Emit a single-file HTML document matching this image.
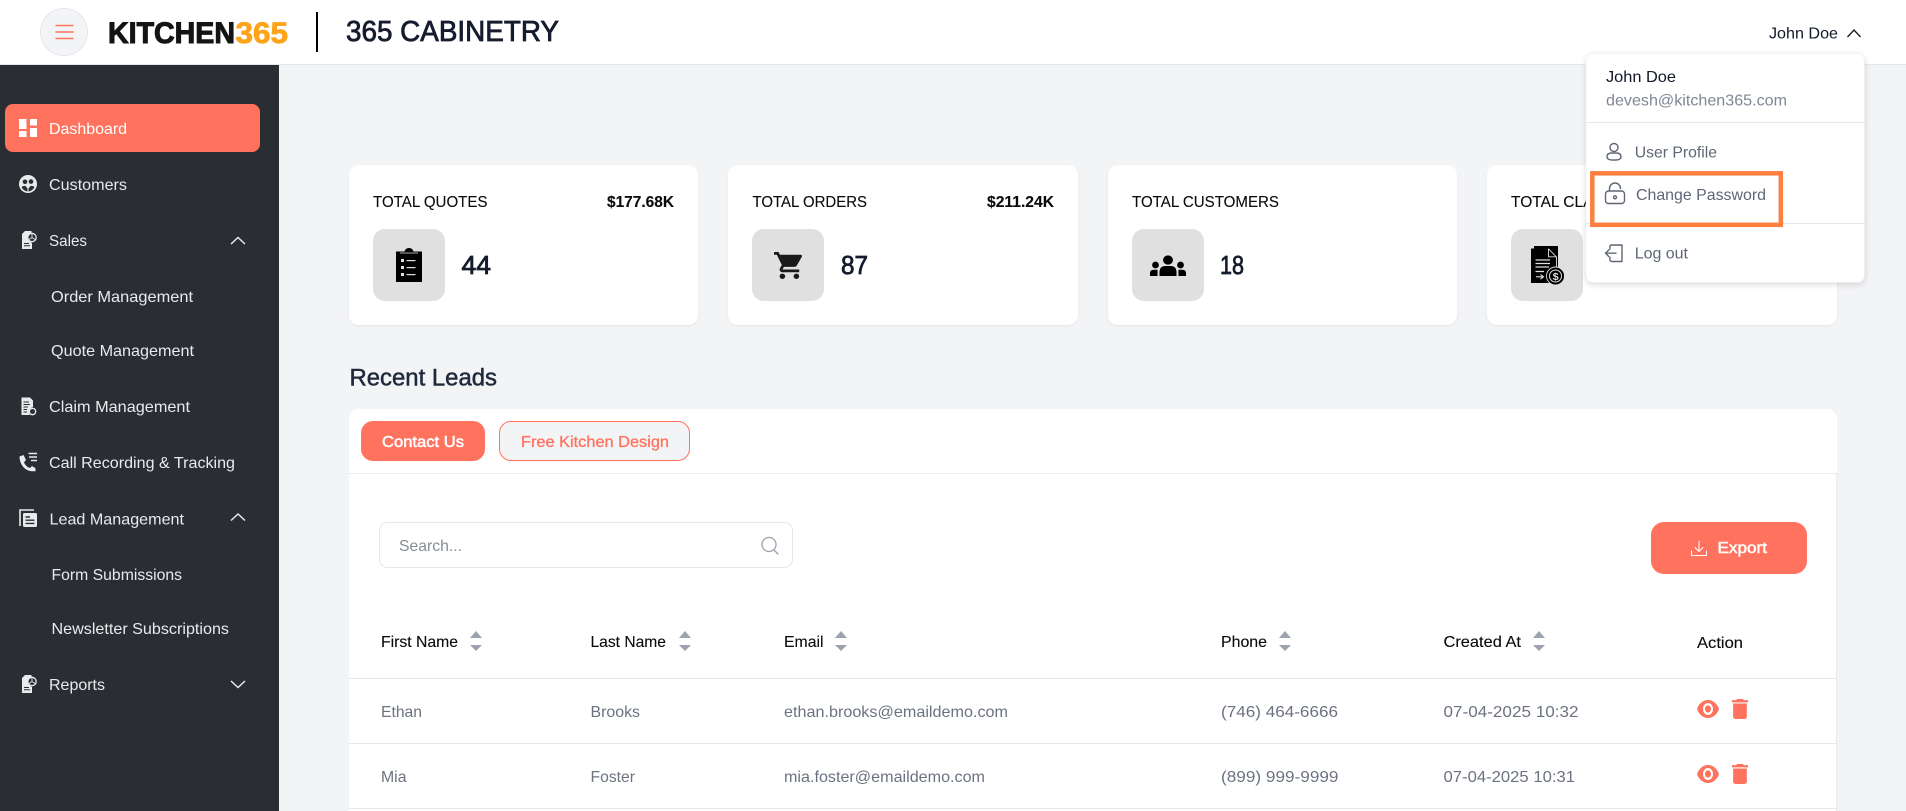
<!DOCTYPE html>
<html lang="en">
<head>
<meta charset="utf-8">
<title>365 Cabinetry Dashboard</title>
<style>
html,body{margin:0;padding:0;width:1906px;height:811px;overflow:hidden;background:#f3f4f6}
svg{display:block;font-family:"Liberation Sans",Arial,sans-serif}
.nav{fill:#e8eaed;font-size:16px}
.hd{fill:#0b0b0b;font-size:16px;stroke:#0b0b0b;stroke-width:.12px}
.td{fill:#6b7280;font-size:16px}
.st{fill:#0b0b0b;font-size:16px;stroke:#0b0b0b;stroke-width:.12px}
.num{fill:#141c2e;font-size:26px;stroke:#141c2e;stroke-width:.8px}
.menu{fill:#5f6775;font-size:16px}
.ic{fill:none;stroke:#5f6775;stroke-width:1.4;stroke-linecap:round;stroke-linejoin:round}
.chev{fill:none;stroke:#e8eaed;stroke-width:1.5}
</style>
</head>
<body>
<svg width="1906" height="811" viewBox="0 0 1906 811" xmlns="http://www.w3.org/2000/svg">
<defs>
<filter id="sh" x="-10%" y="-10%" width="120%" height="125%"><feDropShadow dx="0" dy="2" stdDeviation="3" flood-color="#000" flood-opacity=".14"/></filter>
<filter id="sc" x="-5%" y="-5%" width="110%" height="115%"><feDropShadow dx="0" dy="1" stdDeviation="1" flood-color="#000" flood-opacity=".06"/></filter>
<g id="sort" fill="#9ca3af"><path d="M6 0L12 7H0Z"/><path d="M0 14H12L6 20Z"/></g>
<g id="eye" fill="#ff725e"><path transform="translate(-1,-5.4) scale(1,1.2)" d="M12 4.5C7 4.5 2.73 7.61 1 12c1.73 4.39 6 7.5 11 7.5s9.27-3.11 11-7.5c-1.73-4.39-6-7.5-11-7.5zM12 17c-2.76 0-5-2.24-5-5s2.24-5 5-5 5 2.24 5 5-2.24 5-5 5zm0-8c-1.66 0-3 1.34-3 3s1.34 3 3 3 3-1.34 3-3-1.34-3-3-3z"/></g>
<g id="trash" fill="#ff725e"><path transform="translate(-5.7,-3.3) scale(1.14,1.11)" d="M6 19c0 1.1.9 2 2 2h8c1.1 0 2-.9 2-2V7H6v12zM19 4h-3.5l-1-1h-5l-1 1H5v2h14V4z"/></g>
<g id="docpie"><path d="M4 0H10.5V2A5.4 5.4 0 0 0 11 12V18H1V3Z" fill="#e8eaed"/><path d="M3 12.500H8M3 14.800H9" stroke="#2a2d32" stroke-width="1"/><circle cx="11" cy="6.500" r="4.200" fill="none" stroke="#e8eaed" stroke-width="1.300"/><path d="M11 6.500V3M11 6.500L8 8.500M11 6.500L14 8.500" stroke="#e8eaed" stroke-width=".9"/></g>
</defs>

<!-- page background -->
<rect width="1906" height="811" fill="#f3f4f6"/>

<!-- sidebar -->
<rect x="0" y="64" width="279" height="747" fill="#2a2d32"/>
<rect x="5" y="104" width="255" height="48" rx="8" fill="#ff725e"/>
<g fill="#fff"><rect x="19" y="119" width="7.500" height="10"/><rect x="19" y="131" width="7.500" height="6"/><rect x="30" y="119" width="7" height="6.500"/><rect x="30" y="128" width="7" height="9"/></g>
<text x="49" y="134" font-size="16" fill="#fff" textLength="78" lengthAdjust="spacingAndGlyphs">Dashboard</text>

<circle cx="28" cy="184" r="9" fill="#e8eaed"/>
<g fill="#2a2d32"><circle cx="25" cy="181.800" r="2.300"/><circle cx="31" cy="181.600" r="2.300"/><path d="M21.500 187Q23 185.500 25.500 186L27.500 188.500V191.500Q23.500 191 21.500 187Z"/><path d="M34.500 187Q33 185.500 30.500 186L28.500 188.500V191.500Q32.500 191 34.500 187Z"/></g>
<text class="nav" x="49" y="190" textLength="78" lengthAdjust="spacingAndGlyphs">Customers</text>

<use href="#docpie" transform="translate(21,231)"/>
<text class="nav" x="49" y="246" textLength="38" lengthAdjust="spacingAndGlyphs">Sales</text>
<path class="chev" d="M231 244L238 237.500L245 244"/>

<text class="nav" x="51" y="302" textLength="142" lengthAdjust="spacingAndGlyphs">Order Management</text>
<text class="nav" x="51" y="356" textLength="143" lengthAdjust="spacingAndGlyphs">Quote Management</text>

<path d="M21.500 397.500H30L33 400.500V407A5 5 0 0 0 30 415H21.500Z" fill="#e8eaed"/>
<path d="M23.500 402H29M23.500 404.500H30M23.500 407H28M23.500 409.500H27M23.500 412H27" stroke="#2a2d32" stroke-width="1"/>
<circle cx="32.500" cy="411.500" r="3.200" fill="none" stroke="#e8eaed" stroke-width="1.300"/>
<text class="nav" x="49" y="412" textLength="141" lengthAdjust="spacingAndGlyphs">Claim Management</text>

<path d="M19.500 456.500L23.500 455L26 460L24 462.200C25 465 27.200 467 30 468L32 466L35.500 468.300V471.300H33C25 471.300 19.500 464.500 19.500 456.500Z" fill="#e8eaed"/>
<path d="M28.500 453.500H37M29 457H37M31 460.500H37" stroke="#e8eaed" stroke-width="1.500"/>
<text class="nav" x="49" y="468" textLength="186" lengthAdjust="spacingAndGlyphs">Call Recording &amp; Tracking</text>

<path d="M20 526V510H34" fill="none" stroke="#e8eaed" stroke-width="1.600"/>
<rect x="23" y="513" width="14" height="14" rx="1.500" fill="#e8eaed"/>
<path d="M25.500 517H30M25.500 520.200H34.500M25.500 523.400H34.500" stroke="#2a2d32" stroke-width="1.400"/>
<text class="nav" x="49.500" y="524.500" textLength="134.500" lengthAdjust="spacingAndGlyphs">Lead Management</text>
<path class="chev" d="M231 520.500L238 514L245 520.500"/>

<text class="nav" x="51.500" y="580" textLength="130.500" lengthAdjust="spacingAndGlyphs">Form Submissions</text>
<text class="nav" x="51.500" y="634" textLength="177.500" lengthAdjust="spacingAndGlyphs">Newsletter Subscriptions</text>

<use href="#docpie" transform="translate(21,675)"/>
<text class="nav" x="49" y="690" textLength="56" lengthAdjust="spacingAndGlyphs">Reports</text>
<path class="chev" d="M231 681L238 687.500L245 681"/>

<!-- stat cards -->
<g fill="#fff" filter="url(#sc)">
<rect x="349" y="165" width="349" height="160" rx="10"/>
<rect x="728" y="165" width="350" height="160" rx="10"/>
<rect x="1108" y="165" width="349" height="160" rx="10"/>
<rect x="1487" y="165" width="350" height="160" rx="10"/>
</g>
<g fill="#e0e0e0">
<rect x="373" y="229" width="72" height="72" rx="12"/>
<rect x="752" y="229" width="72" height="72" rx="12"/>
<rect x="1132" y="229" width="72" height="72" rx="12"/>
<rect x="1511" y="229" width="72" height="72" rx="12"/>
</g>

<text class="st" x="373" y="207" textLength="114.500" lengthAdjust="spacingAndGlyphs">TOTAL QUOTES</text>
<text class="st" x="607" y="207" font-weight="700" textLength="67" lengthAdjust="spacingAndGlyphs">$177.68K</text>
<text class="st" x="752.500" y="207" textLength="114.500" lengthAdjust="spacingAndGlyphs">TOTAL ORDERS</text>
<text class="st" x="987" y="207" font-weight="700" textLength="67" lengthAdjust="spacingAndGlyphs">$211.24K</text>
<text class="st" x="1132" y="207" textLength="147" lengthAdjust="spacingAndGlyphs">TOTAL CUSTOMERS</text>
<text class="st" x="1511" y="207" textLength="110" lengthAdjust="spacingAndGlyphs">TOTAL CLAIMS</text>

<text class="num" x="461.500" y="274" textLength="29.500" lengthAdjust="spacingAndGlyphs">44</text>
<text class="num" x="841" y="274" textLength="27" lengthAdjust="spacingAndGlyphs">87</text>
<text class="num" x="1220" y="274" textLength="24" lengthAdjust="spacingAndGlyphs">18</text>

<!-- clipboard -->
<path d="M396 251.500H404.500Q405.500 248 409 248Q412.500 248 413.500 251.500H422V282H396Z" fill="#000"/>
<path d="M400 253H418" stroke="#e0e0e0" stroke-width=".8"/>
<g fill="#e0e0e0"><rect x="401" y="259" width="3" height="3"/><rect x="401" y="266" width="3" height="3"/><rect x="401" y="273" width="3" height="3"/><rect x="406.500" y="260" width="9" height="1.200"/><rect x="406.500" y="267" width="9" height="1.200"/><rect x="406.500" y="274" width="9" height="1.200"/></g>
<!-- cart -->
<path fill="#1a1a1a" transform="translate(772.600,249.300) scale(1.400,1.350)" d="M7 18c-1.100 0-1.990.900-1.990 2S5.900 22 7 22s2-.900 2-2-.900-2-2-2zM1 2v2h2l3.600 7.590-1.350 2.450c-.160.280-.250.610-.250.960 0 1.100.900 2 2 2h12v-2H7.420c-.140 0-.250-.110-.250-.250l.030-.120.900-1.630h7.450c.750 0 1.410-.410 1.750-1.030l3.580-6.490c.080-.140.120-.310.120-.480 0-.550-.450-1-1-1H5.210l-.940-2H1zm16 16c-1.100 0-1.990.900-1.990 2s.890 2 1.990 2 2-.900 2-2-.900-2-2-2z"/>
<!-- users -->
<g fill="#000"><ellipse cx="1168" cy="260" rx="5" ry="4.600"/><circle cx="1155.500" cy="265" r="3.400"/><circle cx="1180.500" cy="265" r="3.400"/>
<path d="M1159.500 276V271.500Q1160 266 1165 266H1171Q1176 266 1176.500 271.500V276Z"/>
<path d="M1150 276V272.500Q1150.500 269.800 1154 269.800H1157.500Q1157.700 272 1157.500 276Z"/>
<path d="M1186 276V272.500Q1185.500 269.800 1182 269.800H1178.500Q1178.300 272 1178.500 276Z"/></g>
<!-- claims doc -->
<rect x="1534" y="246" width="24" height="30" fill="#000"/>
<rect x="1531" y="248.500" width="24" height="34.500" fill="#000"/>
<path d="M1548.500 248.800L1556.500 257V270" fill="none" stroke="#e0e0e0" stroke-width=".9"/>
<path d="M1548.500 248.800V256.800H1556.500" fill="none" stroke="#e0e0e0" stroke-width=".9"/>
<path d="M1535.500 260H1550M1535.500 263.500H1550M1535.500 267H1549M1535.500 271.500H1544" stroke="#e0e0e0" stroke-width="1.200"/>
<path d="M1536 276.800H1543M1540.500 274.500L1543.500 276.800L1540.500 279" stroke="#e0e0e0" stroke-width="1.100" fill="none"/>
<circle cx="1555.500" cy="276" r="9" fill="#000" stroke="#e0e0e0" stroke-width=".9"/>
<circle cx="1555.500" cy="276" r="6" fill="none" stroke="#e0e0e0" stroke-width="1"/>
<text x="1552.700" y="279.800" font-size="10.500" font-weight="700" fill="#e0e0e0">$</text>

<!-- recent leads -->
<text x="349.500" y="385.500" font-size="24" fill="#1f2a3c" stroke="#1f2a3c" stroke-width=".5" textLength="147.500" lengthAdjust="spacingAndGlyphs">Recent Leads</text>

<rect x="349" y="409" width="1488" height="420" rx="10" fill="#fff"/>
<rect x="349" y="473" width="1488" height="1" fill="#e9ebee"/>
<rect x="1836" y="473" width="1" height="338" fill="#e9ebee"/>
<rect x="361" y="421" width="124" height="40" rx="12" fill="#ff725e"/>
<text x="382" y="447" font-size="16" fill="#fff" stroke="#fff" stroke-width=".5" textLength="82" lengthAdjust="spacingAndGlyphs">Contact Us</text>
<rect x="499.500" y="421.500" width="190" height="39" rx="11.500" fill="#f3f4f6" stroke="#ff725e"/>
<text x="521" y="447" font-size="16" fill="#ff725e" stroke="#ff725e" stroke-width=".3" textLength="148" lengthAdjust="spacingAndGlyphs">Free Kitchen Design</text>

<!-- search -->
<rect x="379.500" y="522.500" width="413" height="45" rx="8" fill="#fff" stroke="#e5e7eb"/>
<text x="399" y="551" font-size="16" fill="#868c96" textLength="63" lengthAdjust="spacingAndGlyphs">Search...</text>
<circle cx="769" cy="544.500" r="7" fill="none" stroke="#9ca3af" stroke-width="1.300"/>
<path d="M774 550L778 554" stroke="#9ca3af" stroke-width="1.300" stroke-linecap="round"/>

<!-- export -->
<rect x="1651" y="522" width="156" height="52" rx="13" fill="#ff725e"/>
<path d="M1699 541V551M1695 547.500L1699 551.500L1703 547.500M1691.500 551V555.500H1706.500V551" fill="none" stroke="#fff" stroke-width="1" stroke-linecap="round" stroke-linejoin="round"/>
<text x="1717.500" y="553" font-size="16" fill="#fff" stroke="#fff" stroke-width=".5" textLength="49.500" lengthAdjust="spacingAndGlyphs">Export</text>

<!-- table -->
<text class="hd" x="381" y="647" textLength="77" lengthAdjust="spacingAndGlyphs">First Name</text>
<use href="#sort" x="470" y="631"/>
<text class="hd" x="590.500" y="647" textLength="75.500" lengthAdjust="spacingAndGlyphs">Last Name</text>
<use href="#sort" x="679" y="631"/>
<text class="hd" x="784" y="647" textLength="39.500" lengthAdjust="spacingAndGlyphs">Email</text>
<use href="#sort" x="835" y="631"/>
<text class="hd" x="1221" y="647" textLength="46" lengthAdjust="spacingAndGlyphs">Phone</text>
<use href="#sort" x="1279" y="631"/>
<text class="hd" x="1443.500" y="647" textLength="77.500" lengthAdjust="spacingAndGlyphs">Created At</text>
<use href="#sort" x="1533" y="631"/>
<text class="hd" x="1697" y="648" textLength="46" lengthAdjust="spacingAndGlyphs">Action</text>
<g fill="#e5e7eb"><rect x="349" y="678" width="1488" height="1"/><rect x="349" y="743" width="1488" height="1"/><rect x="349" y="808" width="1488" height="1"/></g>

<text class="td" x="381" y="717" textLength="41" lengthAdjust="spacingAndGlyphs">Ethan</text>
<text class="td" x="590.500" y="717" textLength="49.500" lengthAdjust="spacingAndGlyphs">Brooks</text>
<text class="td" x="784" y="717" textLength="224" lengthAdjust="spacingAndGlyphs">ethan.brooks@emaildemo.com</text>
<text class="td" x="1221" y="717" textLength="117" lengthAdjust="spacingAndGlyphs">(746) 464-6666</text>
<text class="td" x="1443.500" y="717" textLength="135" lengthAdjust="spacingAndGlyphs">07-04-2025 10:32</text>
<use href="#eye" x="1697" y="700"/><use href="#trash" x="1732" y="699"/>

<text class="td" x="381" y="782" textLength="25.500" lengthAdjust="spacingAndGlyphs">Mia</text>
<text class="td" x="590.500" y="782" textLength="44.500" lengthAdjust="spacingAndGlyphs">Foster</text>
<text class="td" x="784" y="782" textLength="201" lengthAdjust="spacingAndGlyphs">mia.foster@emaildemo.com</text>
<text class="td" x="1221" y="782" textLength="117.500" lengthAdjust="spacingAndGlyphs">(899) 999-9999</text>
<text class="td" x="1443.500" y="782" textLength="131.500" lengthAdjust="spacingAndGlyphs">07-04-2025 10:31</text>
<use href="#eye" x="1697" y="765"/><use href="#trash" x="1732" y="764"/>

<!-- header -->
<rect x="0" y="0" width="1906" height="64" fill="#fff"/>
<rect x="0" y="64" width="1906" height="1" fill="#e5e7eb"/>
<circle cx="64" cy="32" r="23.500" fill="#f3f4f6" stroke="#e5e7eb"/>
<path d="M55.500 25.500H73.500M55.500 32H73.500M55.500 38.500H73.500" stroke="#ff725e" stroke-width="1.500"/>
<text x="108" y="43" font-size="30" font-weight="700" fill="#141414" stroke="#141414" stroke-width="1" textLength="127" lengthAdjust="spacingAndGlyphs">KITCHEN</text>
<text x="235.500" y="43" font-size="30" font-weight="700" fill="#ffa31a" stroke="#ffa31a" stroke-width=".8" textLength="52.500" lengthAdjust="spacingAndGlyphs">365</text>
<rect x="316" y="12" width="2" height="40" fill="#000"/>
<text x="346" y="41" font-size="29" fill="#141c2e" stroke="#141c2e" stroke-width=".8" textLength="213" lengthAdjust="spacingAndGlyphs">365 CABINETRY</text>
<text x="1769" y="38.500" font-size="16" fill="#111827" textLength="69" lengthAdjust="spacingAndGlyphs">John Doe</text>
<path d="M1847.500 37L1854 30L1860.500 37" fill="none" stroke="#111827" stroke-width="1.300"/>

<!-- dropdown -->
<rect x="1586" y="53.500" width="278.500" height="229" rx="7" fill="#fff" stroke="#e9ebee" stroke-width=".6" filter="url(#sh)"/>
<text x="1606" y="82" font-size="16" fill="#111827" textLength="70" lengthAdjust="spacingAndGlyphs">John Doe</text>
<text x="1606" y="105.500" font-size="16" fill="#7f8794" textLength="181" lengthAdjust="spacingAndGlyphs">devesh@kitchen365.com</text>
<rect x="1586" y="122" width="279" height="1" fill="#e5e7eb"/>
<g class="ic"><circle cx="1614" cy="147.500" r="4"/><path d="M1607 156.500Q1607 153 1612 153H1616Q1621 153 1621 156.500Q1621 160 1616 160H1612Q1607 160 1607 156.500Z"/></g>
<text class="menu" x="1634.700" y="157.500" textLength="82.300" lengthAdjust="spacingAndGlyphs">User Profile</text>
<g class="ic"><rect x="1605.500" y="191" width="19" height="12.500" rx="3"/><path d="M1609.500 191V188.500A5.500 5.500 0 0 1 1620.500 188.500"/><circle cx="1615" cy="197.300" r="1.500"/></g>
<text class="menu" x="1636" y="200" textLength="130" lengthAdjust="spacingAndGlyphs">Change Password</text>
<rect x="1586" y="223" width="279" height="1" fill="#e5e7eb"/>
<rect x="1592.300" y="173.300" width="188.500" height="51.500" fill="none" stroke="#ff7f3f" stroke-width="4.500"/>
<g class="ic"><path d="M1610 249V246.500Q1610 245 1612 245H1622V261.500H1612Q1610 261.500 1610 260V257.500"/><path d="M1616 253.200H1605.500M1609 249.700L1605.500 253.200L1609 256.700"/></g>
<text class="menu" x="1634.700" y="258.500" textLength="53.300" lengthAdjust="spacingAndGlyphs">Log out</text>
</svg>
</body>
</html>
